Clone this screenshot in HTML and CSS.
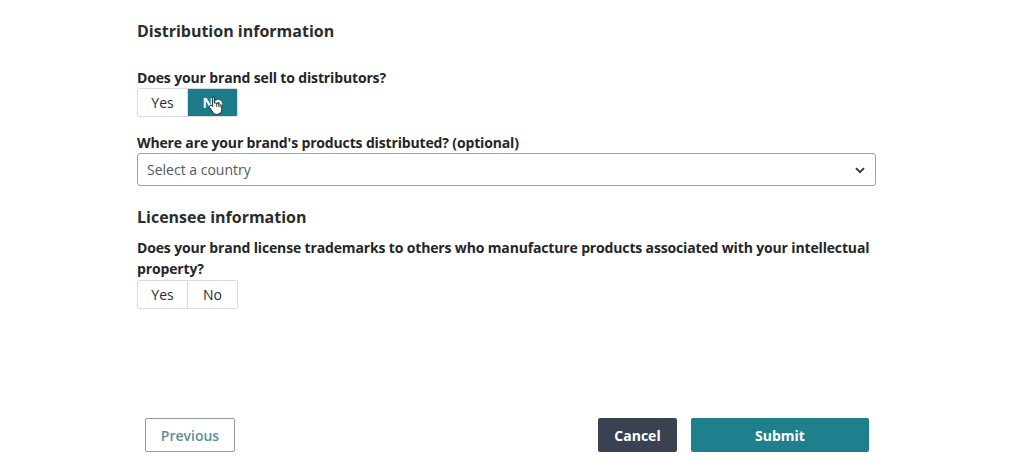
FILE: index.html
```html
<!DOCTYPE html>
<html lang="en">
<head>
    <meta charset="UTF-8">
    <meta name="viewport" content="width=device-width, initial-scale=1.0">
    <title>Brand Registry - Distribution</title>
    <link rel="stylesheet" href="styles.css">
</head>
<body>
    <div class="form">
        <h2 class="section-title first">Distribution information</h2>

        <div class="field">
            <label class="question">Does your brand sell to distributors?</label>
            <div class="toggle">
                <button class="toggle-btn">Yes</button>
                <button class="toggle-btn active">No
                    <svg class="cursor" width="16" height="20" viewBox="0 0 16 20">
                        <path d="M5 1.5c.8 0 1.4.6 1.4 1.4v5.2l.2-.1c.7-.3 1.5 0 1.8.6.6-.4 1.5-.2 1.9.4.6-.3 1.5-.1 1.8.6l.1.2c.8-.2 1.6.4 1.6 1.2v3.6c0 2.6-2 4.8-4.6 4.8H8.4c-1.4 0-2.6-.7-3.4-1.8L1.6 12.5c-.5-.7-.3-1.6.4-2 .6-.4 1.3-.3 1.8.2l.8.9V2.9c0-.8.6-1.4 1.4-1.4z" fill="#fff" stroke="#222" stroke-width="1"/>
                        <path d="M8.4 8.4v3.4M10.3 9v3M12.1 9.8v2.6" stroke="#222" stroke-width="0.8" fill="none"/>
                    </svg>
                </button>
            </div>
        </div>

        <div class="field">
            <label class="question">Where are your brand's products distributed? (optional)</label>
            <div class="select">
                <span class="placeholder">Select a country</span>
                <svg class="chevron" width="10" height="7" viewBox="0 0 10 7">
                    <path d="M1 1.2l4 4 4-4" stroke="#333" stroke-width="1.8" fill="none"/>
                </svg>
            </div>
        </div>

        <h2 class="section-title second">Licensee information</h2>

        <div class="field">
            <label class="question tall">Does your brand license trademarks to others who manufacture products associated with your intellectual property?</label>
            <div class="toggle">
                <button class="toggle-btn">Yes</button>
                <button class="toggle-btn">No</button>
            </div>
        </div>
    </div>

    <div class="actions">
        <button class="btn btn-outline">Previous</button>
        <div class="actions-right">
            <button class="btn btn-dark">Cancel</button>
            <button class="btn btn-primary">Submit</button>
        </div>
    </div>
</body>
</html>
```

FILE: styles.css
```css
body {
    font-family: "Open Sans", "Noto Sans", sans-serif;
    margin: 0;
    padding: 0;
    background-color: #fff;
    color: #232629;
}

.form {
    width: 739px;
    margin-left: 137px;
    padding-top: 20px;
}

.section-title {
    font-size: 16px;
    font-weight: 700;
    margin: 0 0 10px 0;
    line-height: 22px;
    color: #2a2c2e;
}

.section-title.first {
    margin-bottom: 26px;
}

.section-title.second {
    margin-top: 20px;
    margin-bottom: 9px;
}

.field {
    margin-bottom: 16px;
}

.field:last-child {
    margin-bottom: 0;
}

.question {
    display: block;
    font-size: 14px;
    font-weight: 700;
    line-height: 20px;
    letter-spacing: -0.15px;
}

.question.tall {
    line-height: 21px;
    margin-bottom: 1px;
}

.toggle {
    display: flex;
    width: 101px;
    height: 29px;
    border: 1px solid #dadcdf;
    border-radius: 2px;
    box-sizing: border-box;
    overflow: hidden;
}

.toggle-btn {
    position: relative;
    flex: 1;
    border: none;
    background: #fff;
    font-family: inherit;
    font-size: 14px;
    color: #2a2c2e;
    padding: 0;
    cursor: pointer;
}

.toggle-btn + .toggle-btn {
    border-left: 1px solid #dadcdf;
}

.toggle-btn.active {
    background-color: #1c7b89;
    color: #fff;
    font-weight: 700;
}

.cursor {
    position: absolute;
    left: 20px;
    top: 6px;
}

.select {
    display: flex;
    align-items: center;
    justify-content: space-between;
    height: 33px;
    box-sizing: border-box;
    border: 1px solid #9ea3a8;
    border-radius: 3px;
    padding: 0 10px 0 9px;
}

.placeholder {
    font-size: 14px;
    color: #55595e;
}

.chevron {
    margin-top: 1px;
}

.actions {
    display: flex;
    justify-content: space-between;
    width: 724px;
    margin: 109px 0 0 145px;
}

.actions-right {
    display: flex;
    gap: 14px;
}

.btn {
    height: 34px;
    font-family: inherit;
    font-size: 14px;
    font-weight: 700;
    border-radius: 2px;
    cursor: pointer;
}

.btn-outline {
    width: 90px;
    background: #fff;
    border: 1px solid #8d9aa0;
    color: #5f8d97;
    font-weight: 600;
}

.btn-dark {
    width: 79px;
    background-color: #3a4150;
    border: none;
    color: #fff;
}

.btn-primary {
    width: 178px;
    background-color: #1f7f8d;
    border: none;
    color: #fff;
}
```
